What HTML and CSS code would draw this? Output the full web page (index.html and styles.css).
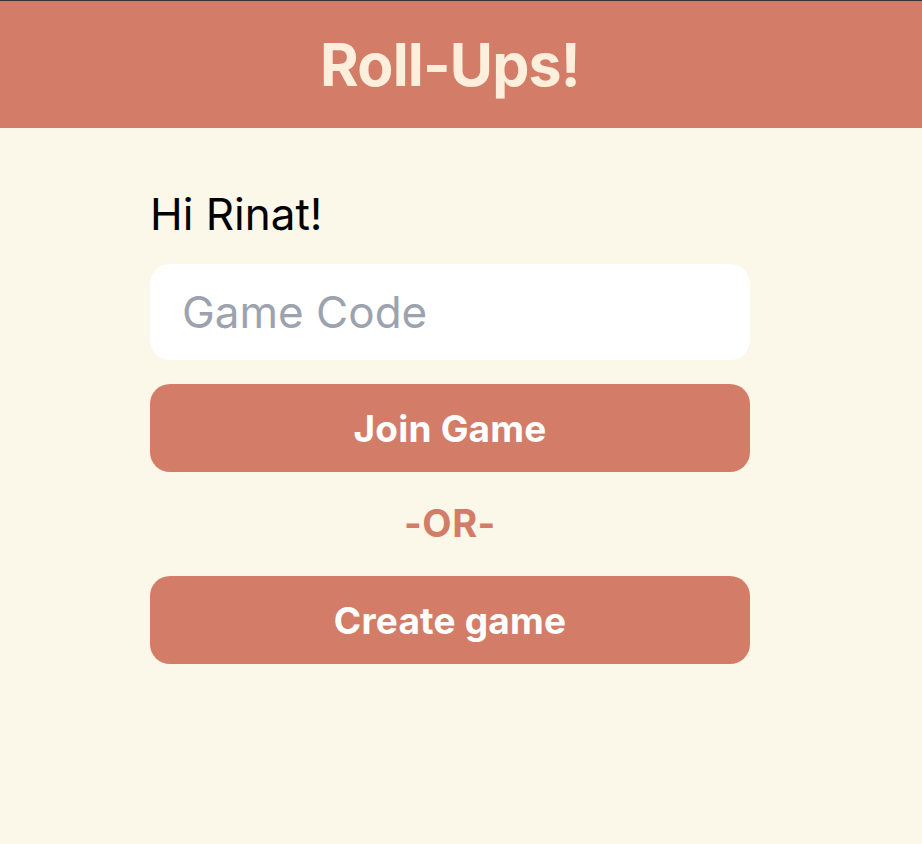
FILE: index.html
```html
<!DOCTYPE html>
<html lang="en">
<head>
<meta charset="utf-8">
<title>Roll-Ups!</title>
<link rel="stylesheet" href="styles.css">
</head>
<body>
<header class="topbar">
  <div class="topbar-inner">
    <h1 class="title">Roll-Ups!</h1>
  </div>
</header>
<main class="panel">
  <p class="greeting">Hi Rinat!</p>
  <input class="code-input" type="text" placeholder="Game Code">
  <button class="btn">Join Game</button>
  <div class="or">-OR-</div>
  <button class="btn">Create game</button>
</main>
</body>
</html>
```
FILE: styles.css
```css
html, body {
  margin: 0;
  padding: 0;
}
body {
  background: #fbf7e9;
  font-family: Inter, "Noto Sans", sans-serif;
  border-top: 1px solid #3a3330;
  min-height: 843px;
}
.topbar {
  background: #d37d68;
  height: 127px;
}
.topbar-inner {
  width: 600px;
  margin-left: 150px;
  height: 100%;
  display: flex;
  align-items: center;
  justify-content: center;
}
.title {
  margin: 0;
  color: #fdefdc;
  font-size: 59px;
  font-weight: 700;
  letter-spacing: -0.8px;
  line-height: 1;
}
.panel {
  width: 600px;
  margin-left: 150px;
  display: flex;
  flex-direction: column;
}
.greeting {
  margin: 64px 0 0;
  font-size: 44px;
  line-height: 1;
  color: #000;
}
.code-input {
  margin-top: 28px;
  height: 96px;
  box-sizing: border-box;
  border: none;
  border-radius: 20px;
  background: #fff;
  padding: 0 32px;
  font-family: inherit;
  font-size: 44px;
  color: #111;
  outline: none;
}
.code-input::placeholder {
  color: #9ca3af;
}
.btn {
  height: 88px;
  border: none;
  border-radius: 20px;
  background: #d37d68;
  color: #fff;
  font-family: inherit;
  font-size: 37px;
  font-weight: 650;
  letter-spacing: 0.2px;
  margin-top: 24px;
  padding: 0;
}
.or {
  text-align: center;
  color: #d37d68;
  font-size: 38px;
  font-weight: 700;
  letter-spacing: 0.5px;
  line-height: 1;
  margin: 32px 0 10px;
}
```
